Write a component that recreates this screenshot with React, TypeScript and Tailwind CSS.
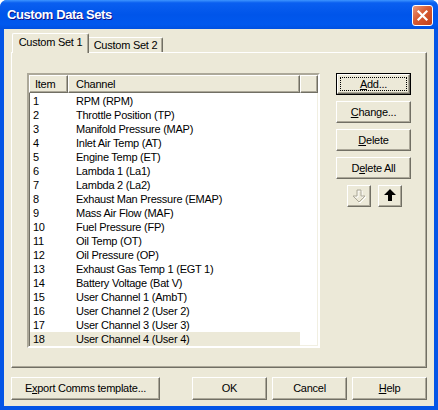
import React from 'react'

const rows: [number, string][] = [
  [1, 'RPM (RPM)'],
  [2, 'Throttle Position (TP)'],
  [3, 'Manifold Pressure (MAP)'],
  [4, 'Inlet Air Temp (AT)'],
  [5, 'Engine Temp (ET)'],
  [6, 'Lambda 1 (La1)'],
  [7, 'Lambda 2 (La2)'],
  [8, 'Exhaust Man Pressure (EMAP)'],
  [9, 'Mass Air Flow (MAF)'],
  [10, 'Fuel Pressure (FP)'],
  [11, 'Oil Temp (OT)'],
  [12, 'Oil Pressure (OP)'],
  [13, 'Exhaust Gas Temp 1 (EGT 1)'],
  [14, 'Battery Voltage (Bat V)'],
  [15, 'User Channel 1 (AmbT)'],
  [16, 'User Channel 2 (User 2)'],
  [17, 'User Channel 3 (User 3)'],
  [18, 'User Channel 4 (User 4)'],
]

const face =
  'flex items-center justify-center bg-[#ECE9D8] border border-t-white border-l-white border-r-[#716F64] border-b-[#716F64] shadow-[inset_-1px_-1px_0_#ACA899]'

function Btn({ children, className = '', def = false }: { children: React.ReactNode; className?: string; def?: boolean }) {
  if (def) {
    return (
      <div className={`border border-black ${className}`}>
        <div className={`${face} w-full h-full p-[2px]`}>
          <div className="w-full h-full border border-dotted border-black flex items-center justify-center">{children}</div>
        </div>
      </div>
    )
  }
  return <div className={`${face} ${className}`}>{children}</div>
}

function Arrow({ up }: { up: boolean }) {
  const pts = up ? '12,4 6,10 10,10 10,16 14,16 14,10 18,10' : '12,17 6,11 10,11 10,5 14,5 14,11 18,11'
  if (up) {
    return (
      <svg width="22" height="20" viewBox="1 1 22 20">
        <polygon points={pts} fill="#000" />
      </svg>
    )
  }
  return (
    <svg width="22" height="20" viewBox="1 1 22 20">
      <polygon points={pts} fill="none" stroke="#fff" strokeWidth="1" transform="translate(1,1)" />
      <polygon points={pts} fill="none" stroke="#ACA899" strokeWidth="1" />
    </svg>
  )
}

export default function App() {
  return (
    <div className="w-[438px] h-[410px] bg-[#0455E6] rounded-t-[7px] overflow-hidden flex flex-col font-['Liberation_Sans',Arial,sans-serif] text-[11px] tracking-[-0.25px] text-black">
      {/* Title bar */}
      <div className="h-[29px] flex items-center justify-between pl-[7px] pr-[5px] bg-[linear-gradient(180deg,#3D95FF_0%,#0A5FF0_10%,#0055EA_50%,#0058EE_85%,#0050E0_100%)]">
        <span className="text-white font-bold text-[13px] tracking-[-0.4px] [text-shadow:1px_1px_#0F1089]">Custom Data Sets</span>
        <div className="w-[21px] h-[21px] mt-[2px] rounded-[3px] border border-white bg-[linear-gradient(135deg,#EC9A7C_0%,#D75A32_45%,#C2401A_100%)] flex items-center justify-center">
          <svg width="13" height="13" viewBox="0 0 13 13">
            <path d="M2.5 2.5 L10.5 10.5 M10.5 2.5 L2.5 10.5" stroke="#fff" strokeWidth="2.2" strokeLinecap="square" />
          </svg>
        </div>
      </div>

      {/* Client */}
      <div className="flex-1 mx-[4px] mb-[4px] bg-[#ECE9D8] flex flex-col px-[7px] pt-[4px]">
        {/* Tabs */}
        <div className="h-[19px] flex items-end pl-[1px] relative z-10">
          <div className="h-[20px] -mb-[1px] w-[77px] bg-[#ECE9D8] border-l border-t border-r border-l-white border-t-white border-r-[#716F64] rounded-tl-[2px] rounded-tr-[2px] shadow-[inset_-1px_0_0_#ACA899] flex items-center justify-center pb-[2px]">
            Custom Set 1
          </div>
          <div className="h-[15px] w-[74px] bg-[#ECE9D8] border-t border-r border-t-white border-r-[#716F64] rounded-tr-[2px] shadow-[inset_-1px_0_0_#ACA899] flex items-center justify-center">
            Custom Set 2
          </div>
        </div>

        {/* Panel */}
        <div className="h-[316px] border border-t-white border-l-white border-r-[#716F64] border-b-[#716F64] shadow-[inset_-1px_-1px_0_#ACA899] flex pl-[15px] pt-[20px]">
          {/* List view */}
          <div className="w-[293px] h-[275px] bg-white border-2 border-t-[#ACA899] border-l-[#ACA899] border-r-white border-b-white shadow-[inset_1px_1px_0_#716F64,inset_-1px_-1px_0_#F1EFE2] flex flex-col">
            <div className="h-[18px] flex shrink-0">
              <div className="w-[39px] h-full border border-t-white border-l-white border-r-[#716F64] border-b-[#716F64] shadow-[inset_-1px_-1px_0_#ACA899] bg-[#ECE9D8] flex items-center pl-[5px]">Item</div>
              <div className="w-[232px] h-full border border-t-white border-l-white border-r-[#716F64] border-b-[#716F64] shadow-[inset_-1px_-1px_0_#ACA899] bg-[#ECE9D8] flex items-center pl-[7px]">Channel</div>
              <div className="flex-1 h-full border border-t-white border-l-white border-r-[#716F64] border-b-[#716F64] shadow-[inset_-1px_-1px_0_#ACA899] bg-[#ECE9D8]" />
            </div>
            <div className="mt-[1px] ml-[1px] w-[270px] flex flex-col">
              {rows.map(([n, name]) => (
                <div key={n} className={`h-[14px] flex items-center pl-[3px] ${n === 18 ? 'bg-[#ECE9D8]' : ''}`}>
                  <span className="w-[43px]">{n}</span>
                  <span>{name}</span>
                </div>
              ))}
            </div>
          </div>

          {/* Buttons */}
          <div className="ml-[16px] w-[75px] flex flex-col gap-[6px]">
            <Btn def className="w-[75px] h-[22px]"><span><u>A</u>dd...</span></Btn>
            <Btn className="w-[75px] h-[22px]"><span><u>C</u>hange...</span></Btn>
            <Btn className="w-[75px] h-[22px]"><span><u>D</u>elete</span></Btn>
            <Btn className="w-[75px] h-[22px]"><span>D<u>e</u>lete All</span></Btn>
            <div className="flex justify-center gap-[7px] pl-[1px]">
              <Btn className="w-[24px] h-[22px]"><Arrow up={false} /></Btn>
              <Btn className="w-[24px] h-[22px]"><Arrow up /></Btn>
            </div>
          </div>
        </div>

        {/* Bottom buttons */}
        <div className="mt-[9px] flex">
          <Btn className="w-[149px] h-[23px]"><span>E<u>x</u>port Comms template...</span></Btn>
          <div className="flex-1" />
          <Btn className="w-[75px] h-[23px]">OK</Btn>
          <Btn className="w-[75px] h-[23px] ml-[5px]">Cancel</Btn>
          <Btn className="w-[75px] h-[23px] ml-[5px]"><span><u>H</u>elp</span></Btn>
        </div>
      </div>
    </div>
  )
}
